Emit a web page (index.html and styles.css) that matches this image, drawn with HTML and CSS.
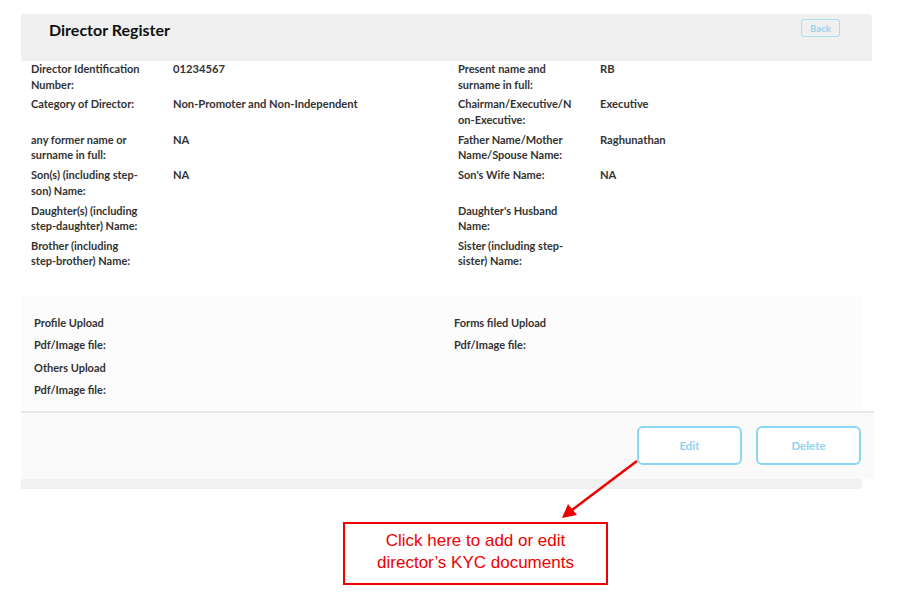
FILE: index.html
```html
<!DOCTYPE html>
<html>
<head>
<meta charset="utf-8">
<title>Director Register</title>
<link rel="stylesheet" href="styles.css">
</head>
<body>
<div class="page">
  <div class="header">
    <h1 class="title">Director Register</h1>
    <button class="back-btn">Back</button>
  </div>

  <div class="fields">
    <div class="label">Director Identification<br>Number:</div>
    <div class="value">01234567</div>
    <div class="label">Present name and<br>surname in full:</div>
    <div class="value">RB</div>

    <div class="label">Category of Director:</div>
    <div class="value">Non-Promoter and Non-Independent</div>
    <div class="label">Chairman/Executive/N<br>on-Executive:</div>
    <div class="value">Executive</div>

    <div class="label">any former name or<br>surname in full:</div>
    <div class="value">NA</div>
    <div class="label">Father Name/Mother<br>Name/Spouse Name:</div>
    <div class="value">Raghunathan</div>

    <div class="label">Son(s) (including step-<br>son) Name:</div>
    <div class="value">NA</div>
    <div class="label">Son's Wife Name:</div>
    <div class="value">NA</div>

    <div class="label">Daughter(s) (including<br>step-daughter) Name:</div>
    <div class="value"></div>
    <div class="label">Daughter's Husband<br>Name:</div>
    <div class="value"></div>

    <div class="label">Brother (including<br>step-brother) Name:</div>
    <div class="value"></div>
    <div class="label">Sister (including step-<br>sister) Name:</div>
    <div class="value"></div>
  </div>

  <div class="uploads">
    <div class="upload-col">
      <div class="upload-line">Profile Upload</div>
      <div class="upload-line">Pdf/Image file:</div>
      <div class="upload-line">Others Upload</div>
      <div class="upload-line">Pdf/Image file:</div>
    </div>
    <div class="upload-col">
      <div class="upload-line">Forms filed Upload</div>
      <div class="upload-line">Pdf/Image file:</div>
    </div>
  </div>

  <div class="footer">
    <button class="action-btn">Edit</button>
    <button class="action-btn">Delete</button>
  </div>
  <div class="bottom-bar"></div>
</div>

<svg class="arrow" width="902" height="601" viewBox="0 0 902 601">
  <line x1="637" y1="461" x2="572" y2="510" stroke="#ee0000" stroke-width="2.5"/>
  <polygon points="562,518 568,504 577,515" fill="#ee0000"/>
</svg>

<div class="callout">Click here to add or edit<br>director’s KYC documents</div>
</body>
</html>
```

FILE: styles.css
```css
* {
  box-sizing: border-box;
}

body {
  margin: 0;
  background: #ffffff;
  font-family: Lato, "Open Sans", sans-serif;
  color: #333333;
  width: 902px;
  height: 601px;
  overflow: hidden;
  position: relative;
}

.page {
  padding-top: 14px;
  padding-left: 21px;
}

.header {
  width: 851px;
  height: 47px;
  background: #f0f0f0;
  border-radius: 0 4px 0 0;
  display: flex;
  justify-content: space-between;
  align-items: flex-start;
  padding: 6px 32px 0 28px;
}

.title {
  margin: 0;
  font-size: 16px;
  font-weight: 700;
  line-height: 20px;
  color: #111111;
}

.back-btn {
  margin-top: -1px;
  width: 39px;
  height: 18px;
  padding: 0;
  background: transparent;
  border: 1px solid #a9ddf2;
  border-radius: 3px;
  font-family: Lato, sans-serif;
  font-size: 9.5px;
  font-weight: 900;
  color: #9ed6ee;
}

.fields {
  width: 851px;
  height: 234px;
  background: #ffffff;
  display: grid;
  grid-template-columns: 142px 285px 142px 1fr;
  grid-auto-rows: 31px;
  row-gap: 4.4px;
  padding: 0 0 0 10px;
  align-content: start;
  font-size: 11px;
  font-weight: 700;
  line-height: 15.5px;
}

.label,
.value {
  white-space: nowrap;
}

.value {
  font-size: 11.2px;
}

.uploads {
  width: 841px;
  height: 116px;
  background: #fcfcfc;
  border-radius: 0 0 4px 0;
  display: grid;
  grid-template-columns: 420px 1fr;
  padding: 17px 0 0 13px;
  font-size: 11px;
  font-weight: 700;
}

.upload-line {
  line-height: 22.4px;
  white-space: nowrap;
}

.footer {
  width: 853px;
  height: 68px;
  background: #fafafa;
  border-top: 2px solid #e8e8e8;
  display: flex;
  justify-content: flex-end;
  align-items: flex-start;
  gap: 14px;
  padding: 13px 13px 0 0;
}

.action-btn {
  width: 105px;
  height: 39px;
  padding: 0;
  background: #ffffff;
  border: 2px solid #8bd5f5;
  border-radius: 6px;
  font-family: Lato, sans-serif;
  font-size: 11.5px;
  font-weight: 700;
  color: #93d3ef;
}

.bottom-bar {
  width: 841px;
  height: 10px;
  background: #f1f1f1;
  border-radius: 0 0 3px 0;
}

.arrow {
  position: absolute;
  left: 0;
  top: 0;
  pointer-events: none;
}

.callout {
  position: absolute;
  left: 343px;
  top: 522px;
  width: 265px;
  height: 63px;
  border: 2px solid #ee0000;
  background: #ffffff;
  color: #ee0000;
  font-family: "Liberation Sans", Arial, sans-serif;
  font-size: 17px;
  line-height: 22px;
  text-align: center;
  padding-top: 6px;
}
```
